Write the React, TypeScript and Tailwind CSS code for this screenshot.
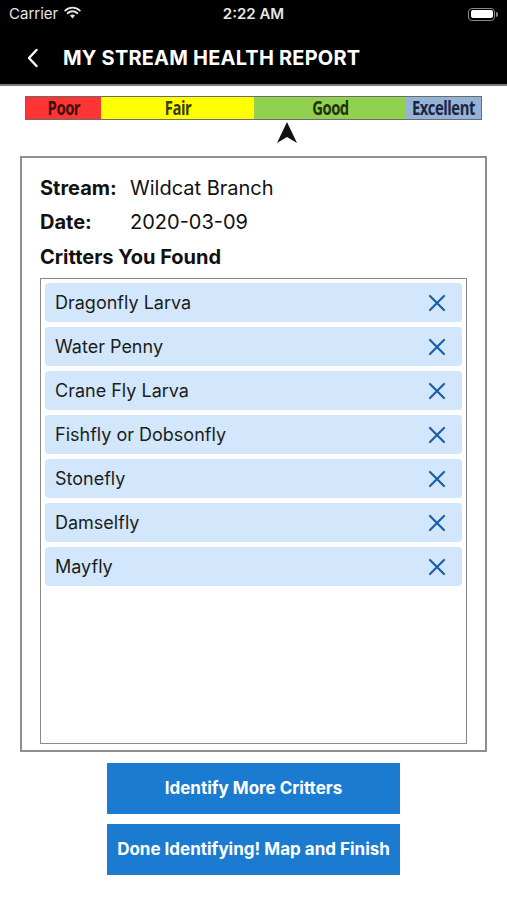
import React from "react";

const critters = [
  "Dragonfly Larva",
  "Water Penny",
  "Crane Fly Larva",
  "Fishfly or Dobsonfly",
  "Stonefly",
  "Damselfly",
  "Mayfly",
];

function XIcon() {
  return (
    <svg width="18" height="18" viewBox="0 0 18 18" fill="none">
      <path d="M2 2 L16 16 M16 2 L2 16" stroke="#1d5ea8" strokeWidth="2.2" strokeLinecap="round" />
    </svg>
  );
}

export default function App() {
  const sans = { fontFamily: 'Inter, "Noto Sans", "Liberation Sans", sans-serif' };
  return (
    <div className="w-[507px] h-[900px] bg-white flex flex-col" style={sans}>
      {/* Header */}
      <div className="bg-black h-[86px] flex flex-col border-b-2 border-[#7a7a7a]">
        <div className="h-[28px] relative flex items-center px-[9px] text-white">
          <span className="text-[15px] text-[#e6e6e6]">Carrier</span>
          <svg className="ml-[6px] -mt-[3px]" width="17" height="13" viewBox="0 0 17 13">
            <path d="M8.5 12.5 L6 9.6 A3.6 3.6 0 0 1 11 9.6 Z" fill="#e6e6e6" />
            <path d="M3.6 7.2 A7 7 0 0 1 13.4 7.2" stroke="#e6e6e6" strokeWidth="1.9" fill="none" strokeLinecap="round" />
            <path d="M1.2 4.6 A10.5 10.5 0 0 1 15.8 4.6" stroke="#e6e6e6" strokeWidth="1.9" fill="none" strokeLinecap="round" />
          </svg>
          <span className="absolute left-0 right-0 text-center text-[15px] font-semibold text-[#e6e6e6] pointer-events-none">2:22 AM</span>
          <div className="ml-auto flex items-center">
            <div className="w-[27px] h-[13px] rounded-[4px] border-[1.5px] border-[#8a8a8a] p-[1.5px]">
              <div className="w-full h-full bg-white rounded-[2px]" />
            </div>
            <div className="w-[2px] h-[5px] bg-[#8a8a8a] rounded-r-sm ml-[1px]" />
          </div>
        </div>
        <div className="flex-1 flex items-center pl-[26px] pt-[3px]">
          <svg width="14" height="20" viewBox="0 0 14 20" className="mr-[23px]">
            <path d="M10.5 2 L3 10 L10.5 18" stroke="white" strokeWidth="2.4" fill="none" strokeLinecap="round" strokeLinejoin="round" />
          </svg>
          <span className="text-white text-[20px] font-bold tracking-[0.2px]">MY STREAM HEALTH REPORT</span>
        </div>
      </div>

      {/* Scale */}
      <div className="mt-[10px] mx-[25px] h-[24px] flex border border-[#6b6b6b] text-[19px] font-bold leading-none overflow-hidden" style={{ fontFamily: '"Open Sans", "Liberation Sans", sans-serif', letterSpacing: "-0.6px" }}>
        <div className="w-[75px] shrink-0 bg-[#ff3434] flex items-center justify-center text-[#3a1010]"><span className="inline-block scale-x-[0.78]">Poor</span></div>
        <div className="w-[153px] shrink-0 bg-[#ffff00] flex items-center justify-center text-[#3a3a10]"><span className="inline-block scale-x-[0.78]">Fair</span></div>
        <div className="w-[152px] shrink-0 bg-[#92d050] flex items-center justify-center text-[#1f3310]"><span className="inline-block scale-x-[0.78]">Good</span></div>
        <div className="flex-1 min-w-0 bg-[#95b3d7] flex items-center justify-center text-[#1d2440]"><span className="inline-block shrink-0 scale-x-[0.78]">Excellent</span></div>
      </div>
      <div className="h-[36px] relative">
        <svg className="absolute left-[276px] top-[2px]" width="22" height="22" viewBox="0 0 22 22">
          <path d="M11 0 L21 21 L11 15 L1 21 Z" fill="#111" />
        </svg>
      </div>

      {/* Card */}
      <div className="mx-[20px] h-[596px] border-2 border-[#8e8e8e] flex flex-col px-[18px] pb-[6px] text-[#111]">
        <div className="flex items-center h-[22px] mt-[19px] text-[20px]">
          <span className="font-bold w-[90px]">Stream:</span>
          <span>Wildcat Branch</span>
        </div>
        <div className="flex items-center h-[22px] mt-[12px] text-[20px]">
          <span className="font-bold w-[90px]">Date:</span>
          <span>2020-03-09</span>
        </div>
        <div className="flex items-center h-[22px] mt-[13px] text-[20px] font-bold">Critters You Found</div>
        <div className="mt-[10px] flex-1 border-[1.5px] border-[#8a8a8a] p-[4px] flex flex-col gap-[5px]">
          {critters.map((c) => (
            <div key={c} className="h-[39px] bg-[#d3e7fc] rounded-[4px] flex items-center pl-[10px] pr-[16px]">
              <span className="text-[18px] text-[#1c1c1c]">{c}</span>
              <span className="ml-auto"><XIcon /></span>
            </div>
          ))}
        </div>
      </div>

      {/* Buttons */}
      <div className="flex flex-col items-center gap-[10px] mt-[11px]">
        <div className="w-[293px] h-[51px] bg-[#1a7bd0] flex items-center justify-center text-white text-[17px] font-bold">Identify More Critters</div>
        <div className="w-[293px] h-[51px] bg-[#1a7bd0] flex items-center justify-center text-white text-[17px] font-bold">Done Identifying! Map and Finish</div>
      </div>
    </div>
  );
}
